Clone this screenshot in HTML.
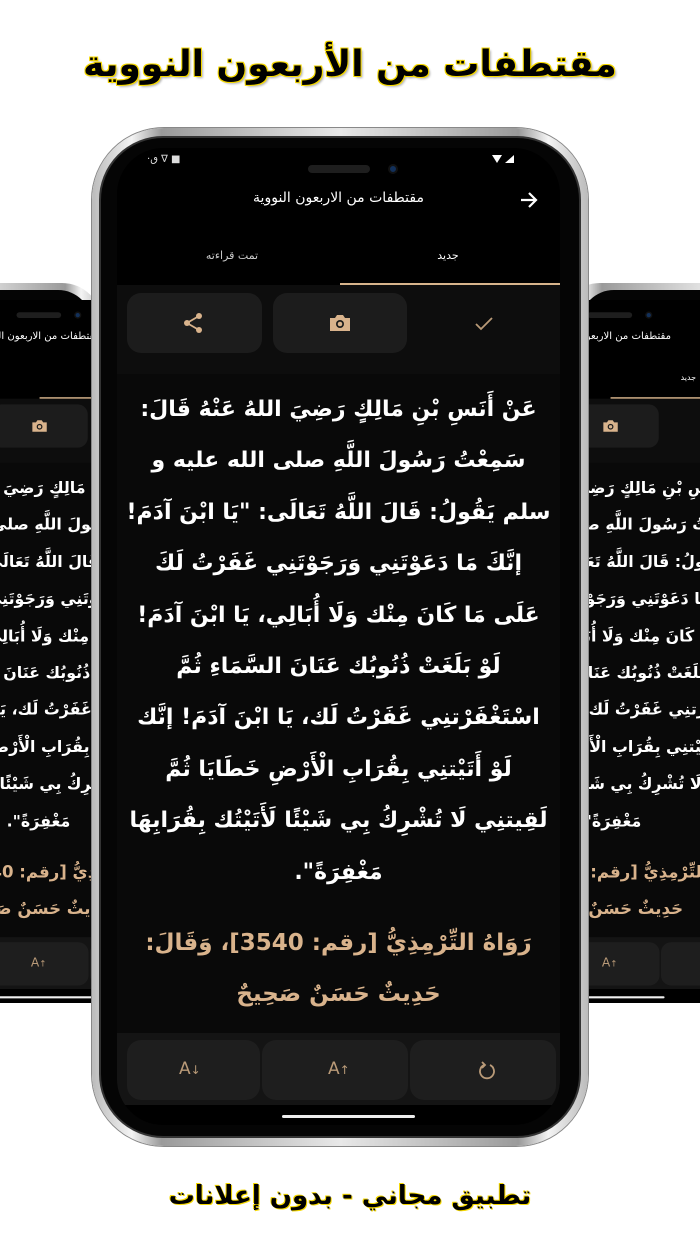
<!DOCTYPE html>
<html><head><meta charset="utf-8">
<style>
*{margin:0;padding:0;box-sizing:border-box}
body{width:700px;height:1244px;background:#fff;position:relative;overflow:hidden;font-family:"DejaVu Sans","Liberation Sans",sans-serif}
.ttl{position:absolute;left:0;width:700px;text-align:center;font-weight:bold;color:#000;direction:rtl;white-space:nowrap}
.frame{position:absolute;background:linear-gradient(90deg,#bbb,#f4f4f4 8%,#9a9a9a 14%,#e8e8e8 50%,#9a9a9a 86%,#f4f4f4 92%,#bbb);}
.bezel{position:absolute;background:#050505}
.screen{position:absolute;width:443px;height:977px;background:#000;overflow:hidden;border-radius:46px;color:#fff}
.screen .a{position:absolute}
.btn{position:absolute;background:#1c1c1c;border-radius:14px}
.txt{position:absolute;left:0;width:443px;top:236px;text-align:center;direction:rtl;font-weight:bold;font-size:22px;white-space:nowrap}
.txt div{height:51.4px;line-height:51.4px}
.gold{color:#d9b38c}
</style></head><body>

<div class="ttl" style="top:44px;font-size:36px;text-shadow:1px 1px 0 #f5d800,-1px -1px 0 #f5d800,1px -1px 0 #f5d800,-1px 1px 0 #f5d800,2px 2px 2px rgba(0,0,0,.3)">مقتطفات من الأربعون النووية</div>
<div class="ttl" style="top:1181px;font-size:26px;text-shadow:1px 1px 0 #f5d800,-1px -1px 0 #f5d800">تطبيق مجاني - بدون إعلانات</div>

<!-- left phone -->
<div class="frame" style="left:-160px;top:283px;width:262px;height:720px;border-radius:40px"></div>
<div class="bezel" style="left:-150px;top:290px;width:242px;height:706px;border-radius:34px"></div>
<div style="position:absolute;left:-121px;top:300px;width:319px;height:703px;overflow:hidden">
<div class="screen" id="L" style="transform:scale(.72);transform-origin:0 0;left:0;top:0"></div></div>

<!-- right phone -->
<div class="frame" style="left:560px;top:283px;width:300px;height:720px;border-radius:40px"></div>
<div class="bezel" style="left:580px;top:290px;width:260px;height:706px;border-radius:34px"></div>
<div style="position:absolute;left:450px;top:300px;width:319px;height:703px;overflow:hidden">
<div class="screen" id="R" style="transform:scale(.72);transform-origin:0 0;left:0;top:0"></div></div>

<!-- main phone -->
<div class="frame" style="left:92px;top:128px;width:496px;height:1018px;border-radius:72px;box-shadow:0 0 0 1px #888"></div>
<div class="bezel" style="left:99px;top:136px;width:482px;height:1002px;border-radius:64px;border:2px solid #333"></div>
<div class="screen" id="M" style="left:117px;top:148px">
 <div class="a" style="left:30px;top:6px;font-size:10px;color:#ddd">·ٯ ∇ ■</div>
 <div class="a" style="left:375px;top:7px;width:0;height:0;border-left:5px solid transparent;border-right:5px solid transparent;border-top:8px solid #fff"></div>
 <div class="a" style="left:388px;top:7px;width:0;height:0;border-left:9px solid transparent;border-bottom:8px solid #fff"></div>
 <div class="a" style="left:191px;top:17px;width:62px;height:8px;border-radius:4px;background:#1e1e1e"></div>
 <div class="a" style="left:271px;top:16px;width:10px;height:10px;border-radius:5px;background:#12305a;border:2px solid #111"></div>
 <div class="a" style="left:0;width:443px;top:42px;text-align:center;font-size:14px;direction:rtl">مقتطفات من الاربعون النووية</div>
 <svg class="a" style="left:402px;top:43px" width="20" height="18" viewBox="0 0 20 18"><path d="M2 9H17M10 2L17 9L10 16" stroke="#fff" stroke-width="2.2" fill="none"/></svg>
 <div class="a" style="left:60px;top:101px;width:110px;text-align:center;font-size:11px;color:#ccc;direction:rtl">تمت قراءته</div>
 <div class="a" style="left:276px;top:101px;width:110px;text-align:center;font-size:11px;color:#fff;direction:rtl">جديد</div>
 <div class="a" style="left:0;top:137px;width:443px;height:900px;background:#0d0d0d"></div>
 <div class="a" style="left:223px;top:135px;width:221px;height:2px;background:#d7b48c"></div>
 <div class="btn" style="left:10px;top:145px;width:135px;height:60px"></div>
 <div class="btn" style="left:156px;top:145px;width:134px;height:60px"></div>
 <svg class="a" style="left:66px;top:164px" width="22" height="22" viewBox="0 0 22 22"><circle cx="16" cy="4" r="3" fill="#d9b38c"/><circle cx="4" cy="11" r="3" fill="#d9b38c"/><circle cx="16" cy="18" r="3" fill="#d9b38c"/><path d="M16 4L4 11L16 18" stroke="#d9b38c" stroke-width="1.8" fill="none"/></svg>
 <svg class="a" style="left:211px;top:165px" width="24" height="20" viewBox="0 0 24 20"><path d="M2 5h5l2-3h6l2 3h5v13H2z" fill="#d9b38c"/><circle cx="12" cy="11" r="4" fill="#1c1c1c"/><circle cx="12" cy="11" r="2.3" fill="#d9b38c"/></svg>
 <svg class="a" style="left:357px;top:168px" width="20" height="16" viewBox="0 0 20 16"><path d="M2 8L7 13L18 2" stroke="#b99a78" stroke-width="1.8" fill="none"/></svg>
 <div class="a" style="left:0;top:226px;width:443px;height:659px;background:#090909"></div>
 <div class="txt">
  <div>عَنْ أَنَسِ بْنِ مَالِكٍ رَضِيَ اللهُ عَنْهُ قَالَ:</div>
  <div>سَمِعْتُ رَسُولَ اللَّهِ صلى الله عليه و</div>
  <div>سلم يَقُولُ: قَالَ اللَّهُ تَعَالَى: "يَا ابْنَ آدَمَ!</div>
  <div>إنَّكَ مَا دَعَوْتَنِي وَرَجَوْتَنِي غَفَرْتُ لَكَ</div>
  <div>عَلَى مَا كَانَ مِنْك وَلَا أُبَالِي، يَا ابْنَ آدَمَ!</div>
  <div>لَوْ بَلَغَتْ ذُنُوبُك عَنَانَ السَّمَاءِ ثُمَّ</div>
  <div>اسْتَغْفَرْتنِي غَفَرْتُ لَك، يَا ابْنَ آدَمَ! إنَّك</div>
  <div>لَوْ أَتَيْتنِي بِقُرَابِ الْأَرْضِ خَطَايَا ثُمَّ</div>
  <div>لَقِيتنِي لَا تُشْرِكُ بِي شَيْئًا لَأَتَيْتُك بِقُرَابِهَا</div>
  <div>مَغْفِرَةً".</div>
  <div style="height:20px"></div>
  <div class="gold" style="font-size:23px">رَوَاهُ التِّرْمِذِيُّ [رقم: 3540]، وَقَالَ:</div>
  <div class="gold" style="font-size:23px">حَدِيثٌ حَسَنٌ صَحِيحٌ</div>
 </div>
 <div class="a" style="left:0;top:885px;width:443px;height:72px;background:#141414"></div>
 <div class="btn" style="left:10px;top:892px;width:133px;height:60px;background:#1e1e1e"></div>
 <div class="btn" style="left:145px;top:892px;width:146px;height:60px;background:#1e1e1e"></div>
 <div class="btn" style="left:293px;top:892px;width:146px;height:60px;background:#1e1e1e"></div>
 <div class="a" style="left:62px;top:911px;font-size:17px;color:#b99a78">A<span style="font-size:12px">↓</span></div>
 <div class="a" style="left:211px;top:911px;font-size:17px;color:#b99a78">A<span style="font-size:12px">↑</span></div>
 <svg class="a" style="left:361px;top:912px" width="18" height="20" viewBox="0 0 18 20"><path d="M6 5A7 7 0 1 0 12 5" stroke="#b99a78" stroke-width="1.8" fill="none"/><path d="M4 2L7 5L4 8" stroke="#b99a78" stroke-width="1.8" fill="none"/></svg>
 <div class="a" style="left:0;top:957px;width:443px;height:20px;background:#000"></div>
 <div class="a" style="left:165px;top:967px;width:133px;height:3px;background:#eee;border-radius:2px"></div>
</div>

<script>
var m=document.getElementById('M').innerHTML;
document.getElementById('L').innerHTML=m;
document.getElementById('R').innerHTML=m;
</script>
</body></html>
